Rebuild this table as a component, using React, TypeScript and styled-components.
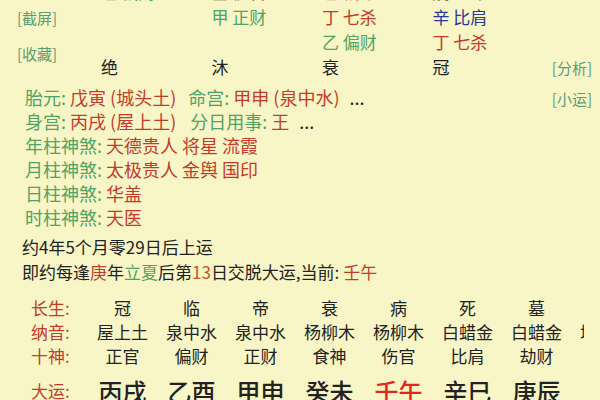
import React from "react";
import styled, { createGlobalStyle } from "styled-components";

const GREEN = "#4fa367";
const LINK = "#5b9c78";
const RED = "#c63a2b";
const BRIGHT_RED = "#e4261f";
const BLUE = "#2b3696";
const DARK = "#222222";
const ORANGE = "#d08a55";
const BROWN = "#8c6a45";

const Global = createGlobalStyle`
  html, body { margin: 0; padding: 0; }
  body {
    width: 600px;
    height: 400px;
    overflow: hidden;
    background: #f8f6c6;
    font-family: "Noto Sans CJK SC", "Noto Sans", sans-serif;
    color: ${DARK};
  }
`;

const Page = styled.div`
  position: relative;
  width: 600px;
  height: 400px;
  overflow: hidden;
  display: flex;
  flex-direction: column;
`;

const TopSection = styled.div`
  display: flex;
  margin-top: -21px;
`;

const LeftLinks = styled.div`
  width: 101px;
  flex: none;
  display: flex;
  flex-direction: column;
  gap: 12px;
  padding: 27px 0 0 17px;
  box-sizing: border-box;
`;

const LinkText = styled.span`
  font-size: 15px;
  line-height: 24px;
  color: ${LINK};
  white-space: nowrap;
`;

const FloatLinks = styled.div`
  position: absolute;
  right: 8px;
  top: 56px;
  display: flex;
  flex-direction: column;
  gap: 7px;
`;

const PillarGrid = styled.div`
  display: grid;
  grid-template-columns: repeat(4, 110.5px);
  grid-auto-rows: 25px;
`;

const PillarCell = styled.div<{ $color: string }>`
  font-size: 17px;
  line-height: 25px;
  color: ${(p) => p.$color};
  white-space: nowrap;
`;

const InfoBlock = styled.div`
  display: flex;
  flex-direction: column;
  padding-left: 25px;
  margin-top: 6px;
`;

const InfoLine = styled.div`
  font-size: 18px;
  line-height: 24px;
  white-space: nowrap;
`;

const Tone = styled.span<{ $color: string; $gap?: number }>`
  color: ${(p) => p.$color};
  margin-left: ${(p) => (p.$gap ? `${p.$gap}px` : "0")};
`;

const LuckBlock = styled.div`
  display: flex;
  flex-direction: column;
  padding-left: 22px;
  margin-top: 5px;
`;

const LuckLine = styled.div`
  font-size: 17px;
  line-height: 25px;
  white-space: nowrap;
  color: ${DARK};
`;

const DayunGrid = styled.div`
  display: grid;
  grid-template-columns: 88px repeat(8, 69px);
  width: 584px;
  overflow: hidden;
  margin-top: 12px;
`;

const RowLabel = styled.div<{ $tall?: boolean }>`
  font-size: 17px;
  line-height: ${(p) => (p.$tall ? "36px" : "24px")};
  margin-top: ${(p) => (p.$tall ? "5px" : "0")};
  padding-left: 31px;
  color: ${RED};
  white-space: nowrap;
`;

const RowCell = styled.div<{ $tall?: boolean; $color?: string }>`
  font-size: ${(p) => (p.$tall ? "24px" : "17px")};
  font-weight: ${(p) => (p.$tall ? 500 : 400)};
  line-height: ${(p) => (p.$tall ? "36px" : "24px")};
  margin-top: ${(p) => (p.$tall ? "5px" : "0")};
  text-align: center;
  white-space: nowrap;
  color: ${(p) => p.$color || DARK};
`;

type Cell = { t: string; c: string } | null;

const pillarRows: Cell[][] = [
  [
    { t: "己 偏财", c: GREEN },
    { t: "壬 伤官", c: "#3a3a2a" },
    { t: "己 偏印", c: ORANGE },
    { t: "戊 正印", c: BROWN },
  ],
  [null, { t: "甲 正财", c: GREEN }, { t: "丁 七杀", c: RED }, { t: "辛 比肩", c: BLUE }],
  [null, null, { t: "乙 偏财", c: GREEN }, { t: "丁 七杀", c: RED }],
  [
    { t: "绝", c: DARK },
    { t: "沐", c: DARK },
    { t: "衰", c: DARK },
    { t: "冠", c: DARK },
  ],
];

const shensha: [string, string][] = [
  ["年柱神煞: ", "天德贵人 将星 流霞"],
  ["月柱神煞: ", "太极贵人 金舆 国印"],
  ["日柱神煞: ", "华盖"],
  ["时柱神煞: ", "天医"],
];

const dayunRows: { label: string; cells: string[]; tall?: boolean }[] = [
  { label: "长生:", cells: ["冠", "临", "帝", "衰", "病", "死", "墓", ""] },
  { label: "纳音:", cells: ["屋上土", "泉中水", "泉中水", "杨柳木", "杨柳木", "白蜡金", "白蜡金", "城头土"] },
  { label: "十神:", cells: ["正官", "偏财", "正财", "食神", "伤官", "比肩", "劫财", ""] },
  { label: "大运:", cells: ["丙戌", "乙酉", "甲申", "癸未", "壬午", "辛巳", "庚辰", ""], tall: true },
];

export default function App() {
  return (
    <>
      <Global />
      <Page>
        <TopSection>
          <LeftLinks>
            <LinkText>[截屏]</LinkText>
            <LinkText>[收藏]</LinkText>
          </LeftLinks>
          <PillarGrid>
            {pillarRows.map((row, ri) =>
              row.map((cell, ci) => (
                <PillarCell key={`${ri}-${ci}`} $color={cell ? cell.c : DARK}>
                  {cell ? cell.t : ""}
                </PillarCell>
              ))
            )}
          </PillarGrid>
        </TopSection>

        <InfoBlock>
          <InfoLine>
            <Tone $color={GREEN}>胎元: </Tone>
            <Tone $color={RED}>戊寅 (城头土)</Tone>
            <Tone $color={GREEN} $gap={12}>命宫: </Tone>
            <Tone $color={RED}>甲申 (泉中水)</Tone>
            <Tone $color={DARK} $gap={10}>...</Tone>
          </InfoLine>
          <InfoLine>
            <Tone $color={GREEN}>身宫: </Tone>
            <Tone $color={RED}>丙戌 (屋上土)</Tone>
            <Tone $color={GREEN} $gap={14}>分日用事: </Tone>
            <Tone $color={RED}>王</Tone>
            <Tone $color={DARK} $gap={10}>...</Tone>
          </InfoLine>
          {shensha.map(([label, value]) => (
            <InfoLine key={label}>
              <Tone $color={GREEN}>{label}</Tone>
              <Tone $color={RED}>{value}</Tone>
            </InfoLine>
          ))}
        </InfoBlock>

        <LuckBlock>
          <LuckLine>约4年5个月零29日后上运</LuckLine>
          <LuckLine>
            即约每逢<Tone $color={RED}>庚</Tone>年<Tone $color={GREEN}>立夏</Tone>后第
            <Tone $color={"#c9512c"}>13</Tone>日交脱大运,当前: <Tone $color={RED}>壬午</Tone>
          </LuckLine>
        </LuckBlock>

        <DayunGrid>
          {dayunRows.map((row) => (
            <React.Fragment key={row.label}>
              <RowLabel $tall={row.tall}>{row.label}</RowLabel>
              {row.cells.map((c, i) => (
                <RowCell
                  key={i}
                  $tall={row.tall}
                  $color={row.tall && c === "壬午" ? BRIGHT_RED : DARK}
                >
                  {c}
                </RowCell>
              ))}
            </React.Fragment>
          ))}
        </DayunGrid>

        <FloatLinks>
          <LinkText>[分析]</LinkText>
          <LinkText>[小运]</LinkText>
        </FloatLinks>
      </Page>
    </>
  );
}
